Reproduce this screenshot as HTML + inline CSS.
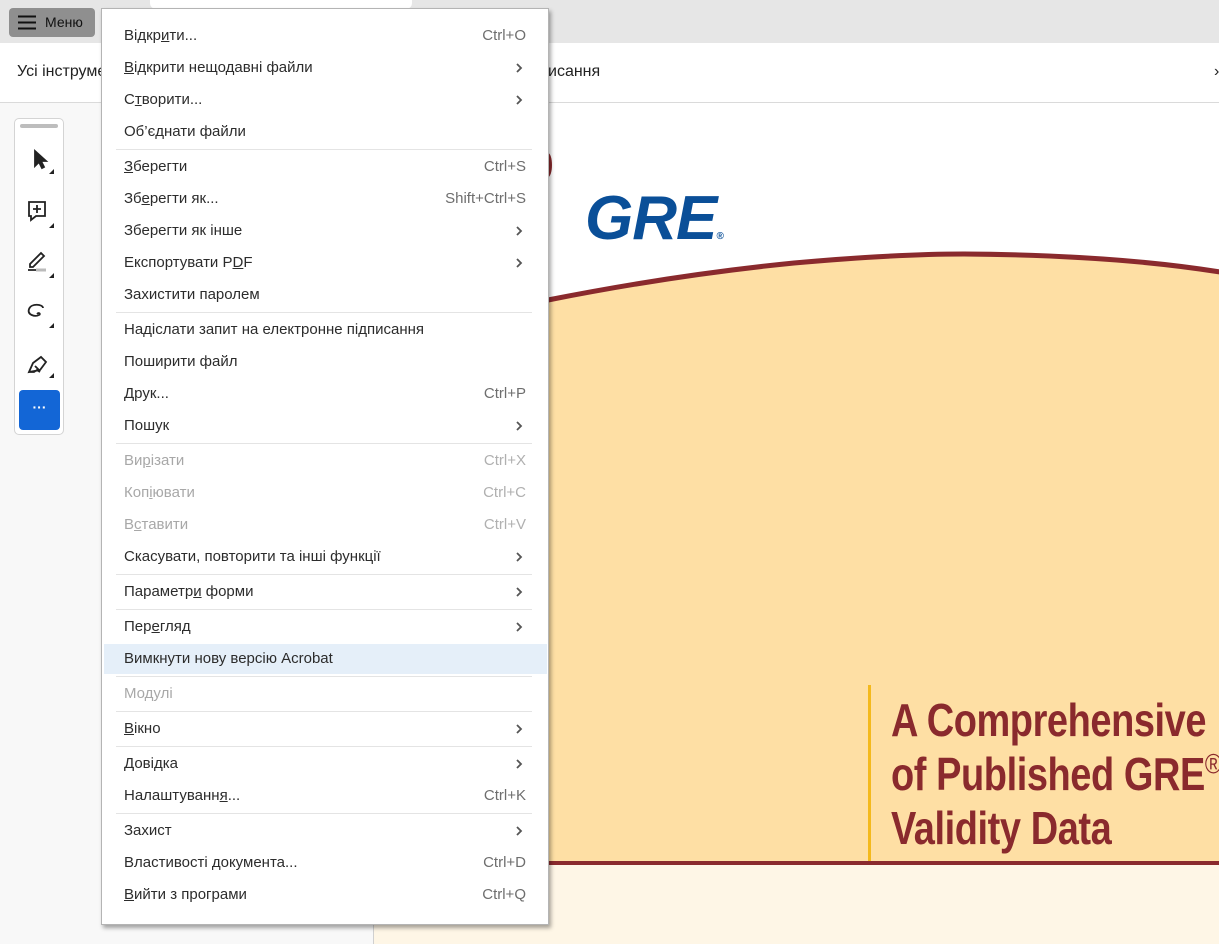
<!DOCTYPE html>
<html><head><meta charset="utf-8"><style>
*{margin:0;padding:0;box-sizing:border-box}
body{width:1219px;height:944px;overflow:hidden;position:relative;font-family:"Liberation Sans",sans-serif;background:#f8f8f8}
.abs{position:absolute}
.top{left:0;top:0;width:1219px;height:43px;background:#e6e6e6}
.mbtn{left:9px;top:8px;width:86px;height:29px;background:#8f8f8f;border-radius:4px;font-size:14px;color:#111}
.bar2{left:0;top:43px;width:1219px;height:60px;background:#fff;border-bottom:1px solid #dadada}
.menu{left:101px;top:8px;width:448px;height:917px;background:#fff;border:1px solid #b4b4b4;box-shadow:2px 3px 4px rgba(0,0,0,.35)}
.it{position:absolute;left:22px;width:402px;height:32px;line-height:34px;font-size:15px;color:#2c2c2c}
.it.d{color:#a8a8a8}
.it .r{position:absolute;right:0;top:0;color:#6e6e6e}
.it.d .r{color:#b0b0b0}
.it .c{position:absolute;right:3px;top:12px;width:8px;height:10px}
.sep{position:absolute;left:14px;width:416px;height:1px;background:#e4e4e4}
u{text-decoration:underline}
.title{left:891px;font-weight:bold;font-size:46px;color:#8a2a2d;line-height:54px;white-space:nowrap;transform:scaleX(.825);transform-origin:0 0;letter-spacing:-0.5px}
</style></head><body>
<div class="abs top"></div>
<div class="abs" style="left:150px;top:0;width:262px;height:9px;background:#fff;border-radius:0 0 6px 6px"></div>
<div class="abs mbtn"><svg class="abs" style="left:9px;top:7px" width="18" height="15"><path d="M0 1.5H18M0 7.5H18M0 13.5H18" stroke="#111" stroke-width="2"/></svg><span class="abs" style="left:36px;top:6px">Меню</span></div>
<div class="abs bar2"><span class="abs" style="left:17px;top:20px;font-size:16px;color:#222">Усі інструменти</span><span class="abs" style="left:548px;top:20px;font-size:16px;color:#222">исання</span><span class="abs" style="left:1214px;top:20px;font-size:16px;color:#222">›</span></div>
<div class="abs" style="left:373px;top:103px;width:846px;height:841px;background:#fff;border-left:1px solid #d0d0d0;overflow:hidden">
<svg width="846" height="841" style="position:absolute;left:0;top:0">
<path d="M0 232 Q 100 212 174 197 Q 300 172 420 160 Q 520 151 590 151 Q 740 152 846 169 L846 760 L0 760Z" fill="#fedfa4"/>
<path d="M0 232 Q 100 212 174 197 Q 300 172 420 160 Q 520 151 590 151 Q 740 152 846 169" fill="none" stroke="#8a2a2d" stroke-width="5"/>
<rect x="0" y="758" width="846" height="4" fill="#8a2a2d"/>
<rect x="0" y="762" width="846" height="80" fill="#fef6e6"/>
<rect x="494" y="582" width="3" height="176" fill="#f4b91c"/>
<ellipse cx="174" cy="62" rx="4" ry="12" fill="#8a2a2d"/>
</svg>
<div class="abs" style="left:211px;top:80px;font-size:62px;font-weight:bold;font-style:italic;color:#0a4f98;letter-spacing:-1px">GRE<span style="font-size:10px;letter-spacing:0">®</span></div>
</div>
<div class="abs title" style="top:693px">A Comprehensive<br>of Published GRE<sup style="font-size:28px;font-weight:normal;line-height:0">®</sup><br>Validity Data</div>
<div class="abs" style="left:14px;top:118px;width:50px;height:317px;background:#fff;border:1px solid #d4d4d4;border-radius:5px">
<div class="abs" style="left:5px;top:5px;width:38px;height:4px;background:#bdbdbd;border-radius:2px"></div>
<svg class="abs" style="left:0;top:25px" width="50" height="270" fill="none" stroke="#222" stroke-width="1.8">
<path d="M20 7 L20 22 L24 18 L27 24 L29 23 L26 17 L31 17 Z" fill="#222"/>
<path d="M34 30 l5 0 l0 -5z" fill="#222" stroke="none"/>
<path d="M14 58 h16 v14 h-9 l-5 4 v-4 h-2 z"/><path d="M22 61 v8 M18 65 h8"/>
<path d="M34 84 l5 0 l0 -5z" fill="#222" stroke="none"/>
<path d="M15 120 l11 -11 l3 3 l-11 11 h-3z M13 126 h8"/><path d="M21 126 h10" stroke="#bbb" stroke-width="3"/>
<path d="M34 134 l5 0 l0 -5z" fill="#222" stroke="none"/>
<path d="M28 164 c0 -4 -12 -5 -14 1 c-2 6 6 8 10 6 c2 -1 0 -3 -2 -1"/>
<path d="M34 184 l5 0 l0 -5z" fill="#222" stroke="none"/>
<path d="M14 228 l4 -9 l8 -6 l5 5 l-6 8 z M20 222 l4 4 M14 228 h5 l3 -2 l3 2"/>
<path d="M34 234 l5 0 l0 -5z" fill="#222" stroke="none"/>
</svg>
<div class="abs" style="left:4px;top:271px;width:41px;height:40px;background:#1366d6;border-radius:4px;color:#fff;font-size:14px;text-align:center;line-height:34px;font-weight:bold">···</div>
</div>
<svg width="0" height="0" style="position:absolute"><defs><symbol id="ch" viewBox="0 0 8 10"><path d="M2 1 L6 5 L2 9" fill="none" stroke="#555" stroke-width="1.8"/></symbol></defs></svg>
<div class="abs menu">
<div class="it" style="top:10px">Відкр<u>и</u>ти...<span class="r">Ctrl+O</span></div>
<div class="it" style="top:42px"><u>В</u>ідкрити нещодавні файли<svg class="c"><use href="#ch"/></svg></div>
<div class="it" style="top:74px">С<u>т</u>ворити...<svg class="c"><use href="#ch"/></svg></div>
<div class="it" style="top:106px">Об’єднати файли</div>
<div class="sep" style="top:140px"></div>
<div class="it" style="top:141px"><u>З</u>берегти<span class="r">Ctrl+S</span></div>
<div class="it" style="top:173px">Зб<u>е</u>регти як...<span class="r">Shift+Ctrl+S</span></div>
<div class="it" style="top:205px">Зберегти як інше<svg class="c"><use href="#ch"/></svg></div>
<div class="it" style="top:237px">Експортувати P<u>D</u>F<svg class="c"><use href="#ch"/></svg></div>
<div class="it" style="top:269px">Захистити паролем</div>
<div class="sep" style="top:303px"></div>
<div class="it" style="top:304px">Надіслати запит на електронне підписання</div>
<div class="it" style="top:336px">Поширити файл</div>
<div class="it" style="top:368px"><u>Д</u>рук...<span class="r">Ctrl+P</span></div>
<div class="it" style="top:400px">Пошук<svg class="c"><use href="#ch"/></svg></div>
<div class="sep" style="top:434px"></div>
<div class="it d" style="top:435px">Ви<u>р</u>ізати<span class="r">Ctrl+X</span></div>
<div class="it d" style="top:467px">Коп<u>і</u>ювати<span class="r">Ctrl+C</span></div>
<div class="it d" style="top:499px">В<u>с</u>тавити<span class="r">Ctrl+V</span></div>
<div class="it" style="top:531px">Скасувати, повторити та інші функції<svg class="c"><use href="#ch"/></svg></div>
<div class="sep" style="top:565px"></div>
<div class="it" style="top:566px">Параметр<u>и</u> форми<svg class="c"><use href="#ch"/></svg></div>
<div class="sep" style="top:600px"></div>
<div class="it" style="top:601px">Пер<u>е</u>гляд<svg class="c"><use href="#ch"/></svg></div>
<div class="abs" style="left:2px;top:635px;width:443px;height:30px;background:#e5eff9"></div>
<div class="it" style="top:633px">Вимкнути нову версію Acrobat</div>
<div class="sep" style="top:667px"></div>
<div class="it d" style="top:668px">Модулі</div>
<div class="sep" style="top:702px"></div>
<div class="it" style="top:703px"><u>В</u>ікно<svg class="c"><use href="#ch"/></svg></div>
<div class="sep" style="top:737px"></div>
<div class="it" style="top:738px">Довідка<svg class="c"><use href="#ch"/></svg></div>
<div class="it" style="top:770px">Налаштуванн<u>я</u>...<span class="r">Ctrl+K</span></div>
<div class="sep" style="top:804px"></div>
<div class="it" style="top:805px">Захист<svg class="c"><use href="#ch"/></svg></div>
<div class="it" style="top:837px">Властивості документа...<span class="r">Ctrl+D</span></div>
<div class="it" style="top:869px"><u>В</u>ийти з програми<span class="r">Ctrl+Q</span></div>
</div>
</body></html>
